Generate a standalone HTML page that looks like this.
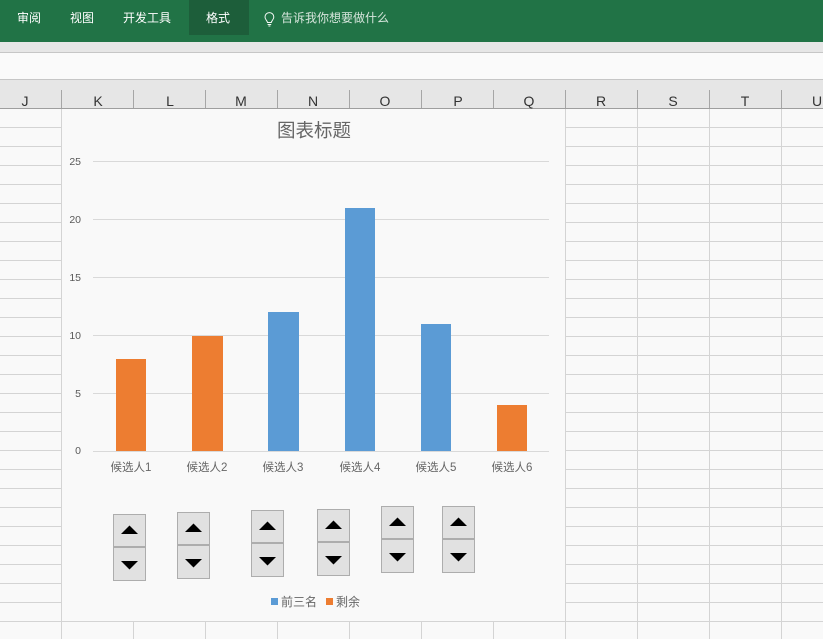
<!DOCTYPE html>
<html><head><meta charset="utf-8">
<style>
html,body{margin:0;padding:0;background:#f9f9f9}
#p{position:relative;width:823px;height:639px;overflow:hidden;background:#f9f9f9;font-family:"Liberation Sans","Noto Sans CJK SC",sans-serif}
#p div,#p span{position:absolute;white-space:nowrap}
.tab{top:10px;font-size:12px;line-height:16px;color:#fff}
.col{top:91px;width:72px;text-align:center;font-size:14px;line-height:20px;color:#333}
.y{width:20px;left:61px;text-align:right;font-size:10.5px;line-height:12px;color:#595959}
.x{top:460px;width:70px;text-align:center;font-size:11.5px;line-height:16px;color:#666}
</style></head><body>
<div id="p">
<div style="left:0;top:0;width:823px;height:42px;background:#217346"></div>
<div style="left:189px;top:0;width:60px;height:35px;background:#1d5e3a"></div>
<div class="tab" style="left:17px">审阅</div>
<div class="tab" style="left:70px">视图</div>
<div class="tab" style="left:123px">开发工具</div>
<div class="tab" style="left:206px">格式</div>
<svg style="position:absolute;left:263px;top:12px" width="13" height="15" viewBox="0 0 13 15"><path d="M4.5 10.5C4.3 8.6 2 7.6 2 5A4.4 4.4 0 0 1 10.8 5C10.8 7.6 8.5 8.6 8.3 10.5ZM4.6 12.5H8.2M5.4 14H7.4" fill="none" stroke="#f4f8f5" stroke-width="1"/></svg>
<div class="tab" style="left:281px;color:#d6e5dc">告诉我你想要做什么</div>

<div style="left:0;top:42px;width:823px;height:10px;background:#e6e6e6"></div>
<div style="left:0;top:52px;width:823px;height:1px;background:#c6c6c6"></div>
<div style="left:0;top:53px;width:823px;height:26px;background:#fafafa"></div>
<div style="left:0;top:79px;width:823px;height:1px;background:#c6c6c6"></div>
<div style="left:0;top:80px;width:823px;height:28px;background:#e6e6e6"></div>
<div style="left:0;top:108px;width:823px;height:1px;background:#9e9e9e"></div>

<svg style="position:absolute;left:0;top:0" width="823" height="639">
<g fill="#a6a6a6">
<rect x="61" y="90" width="1" height="18"/><rect x="133" y="90" width="1" height="18"/><rect x="205" y="90" width="1" height="18"/><rect x="277" y="90" width="1" height="18"/><rect x="349" y="90" width="1" height="18"/><rect x="421" y="90" width="1" height="18"/><rect x="493" y="90" width="1" height="18"/><rect x="565" y="90" width="1" height="18"/><rect x="637" y="90" width="1" height="18"/><rect x="709" y="90" width="1" height="18"/><rect x="781" y="90" width="1" height="18"/>
</g>
<g fill="#d4d4d4">
<rect x="61" y="109" width="1" height="530"/><rect x="133" y="621" width="1" height="18"/><rect x="205" y="621" width="1" height="18"/><rect x="277" y="621" width="1" height="18"/><rect x="349" y="621" width="1" height="18"/><rect x="421" y="621" width="1" height="18"/><rect x="493" y="621" width="1" height="18"/>
<rect x="565" y="109" width="1" height="530"/><rect x="637" y="109" width="1" height="530"/><rect x="709" y="109" width="1" height="530"/><rect x="781" y="109" width="1" height="530"/>
<rect x="61" y="621" width="505" height="1"/>
</g>
<path d="M0 127.5H61M0 146.5H61M0 165.5H61M0 184.5H61M0 203.5H61M0 222.5H61M0 241.5H61M0 260.5H61M0 279.5H61M0 298.5H61M0 317.5H61M0 336.5H61M0 355.5H61M0 374.5H61M0 393.5H61M0 412.5H61M0 431.5H61M0 450.5H61M0 469.5H61M0 488.5H61M0 507.5H61M0 526.5H61M0 545.5H61M0 564.5H61M0 583.5H61M0 602.5H61M0 621.5H61
M566 127.5H823M566 146.5H823M566 165.5H823M566 184.5H823M566 203.5H823M566 222.5H823M566 241.5H823M566 260.5H823M566 279.5H823M566 298.5H823M566 317.5H823M566 336.5H823M566 355.5H823M566 374.5H823M566 393.5H823M566 412.5H823M566 431.5H823M566 450.5H823M566 469.5H823M566 488.5H823M566 507.5H823M566 526.5H823M566 545.5H823M566 564.5H823M566 583.5H823M566 602.5H823M566 621.5H823" stroke="#d4d4d4" stroke-width="1" fill="none"/>
<path d="M93 161.5H549M93 219.5H549M93 277.5H549M93 335.5H549M93 393.5H549M93 451.5H549" stroke="#d9d9d9" stroke-width="1" fill="none"/>
<rect x="116" y="359" width="30" height="92" fill="#ed7d31"/>
<rect x="192" y="336" width="31" height="115" fill="#ed7d31"/>
<rect x="268" y="312" width="31" height="139" fill="#5b9bd5"/>
<rect x="345" y="208" width="30" height="243" fill="#5b9bd5"/>
<rect x="421" y="324" width="30" height="127" fill="#5b9bd5"/>
<rect x="497" y="405" width="30" height="46" fill="#ed7d31"/>
<rect x="271" y="598" width="7" height="7" fill="#5b9bd5"/>
<rect x="326" y="598" width="7" height="7" fill="#ed7d31"/>
<defs>
<g id="sp">
<rect x="0.5" y="0.5" width="32" height="66" fill="#e1e1e1" stroke="#adadad"/>
<rect x="1" y="32" width="31" height="2" fill="#adadad"/>
<path d="M16.5 11.5L25 20H8Z" fill="#000"/>
<path d="M8 47H25L16.5 55.5Z" fill="#000"/>
</g>
</defs>
<use href="#sp" x="113" y="514"/>
<use href="#sp" x="177" y="512"/>
<use href="#sp" x="251" y="510"/>
<use href="#sp" x="317" y="509"/>
<use href="#sp" x="381" y="506"/>
<use href="#sp" x="442" y="506"/>
</svg>

<div class="col" style="left:-11px">J</div>
<div class="col" style="left:62px">K</div>
<div class="col" style="left:134px">L</div>
<div class="col" style="left:205px">M</div>
<div class="col" style="left:277px">N</div>
<div class="col" style="left:349px">O</div>
<div class="col" style="left:422px">P</div>
<div class="col" style="left:493px">Q</div>
<div class="col" style="left:565px">R</div>
<div class="col" style="left:637px">S</div>
<div class="col" style="left:709px">T</div>
<div class="col" style="left:781px">U</div>

<div style="left:277px;top:120px;font-size:18.5px;line-height:22px;color:#666">图表标题</div>
<div class="y" style="top:156px">25</div>
<div class="y" style="top:214px">20</div>
<div class="y" style="top:272px">15</div>
<div class="y" style="top:330px">10</div>
<div class="y" style="top:388px">5</div>
<div class="y" style="top:445px">0</div>
<div class="x" style="left:96px">候选人1</div>
<div class="x" style="left:172px">候选人2</div>
<div class="x" style="left:248px">候选人3</div>
<div class="x" style="left:325px">候选人4</div>
<div class="x" style="left:401px">候选人5</div>
<div class="x" style="left:477px">候选人6</div>
<div style="left:281px;top:594px;font-size:12px;line-height:16px;color:#666">前三名</div>
<div style="left:336px;top:594px;font-size:12px;line-height:16px;color:#666">剩余</div>
</div>
</body></html>
